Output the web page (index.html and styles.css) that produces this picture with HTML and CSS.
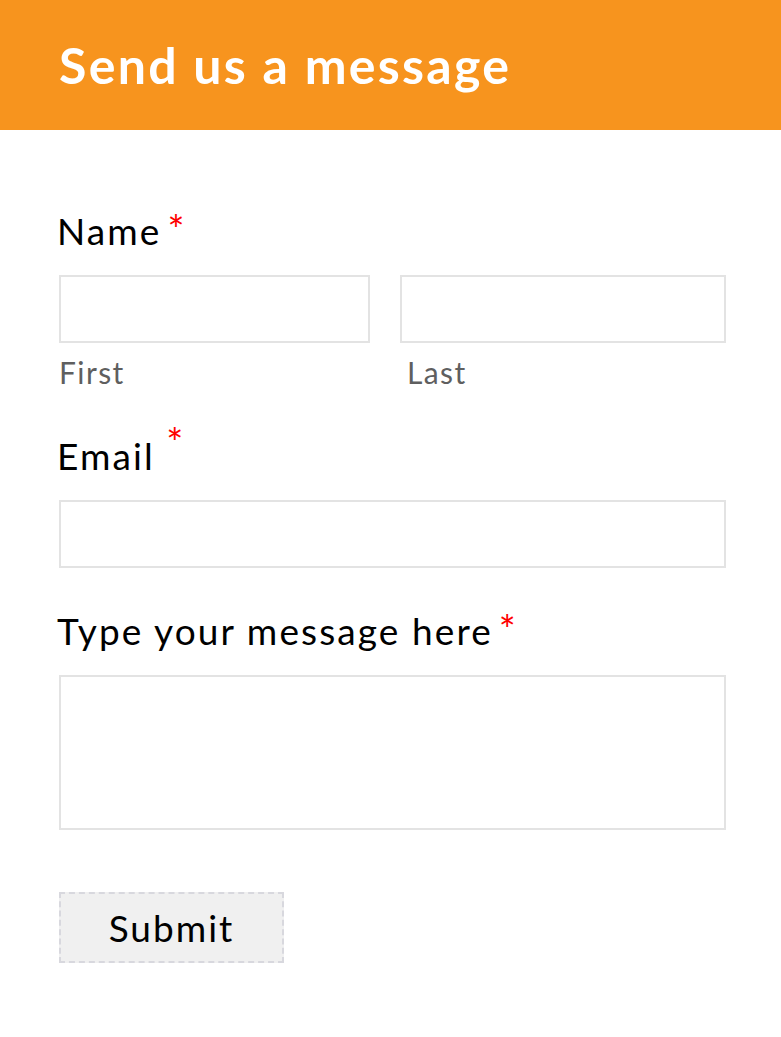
FILE: index.html
```html
<!DOCTYPE html>
<html lang="en">

<head>
    <meta charset="UTF-8">
    <meta name="viewport" content="width=device-width, initial-scale=1.0">
    <title>Send us a message</title>
    <link rel="stylesheet" href="styles.css">
</head>

<body>
    <header class="banner">
        <h1>Send us a message</h1>
    </header>
    <form class="contact">
        <div class="field">
            <label class="field-label">Name<span class="req">*</span></label>
            <div class="name-row">
                <div class="name-col first">
                    <input type="text" class="box">
                    <span class="sub">First</span>
                </div>
                <div class="name-col last">
                    <input type="text" class="box">
                    <span class="sub">Last</span>
                </div>
            </div>
        </div>
        <div class="field email">
            <label class="field-label">Email <span class="req up">*</span></label>
            <input type="email" class="box">
        </div>
        <div class="field msg">
            <label class="field-label">Type your message here<span class="req">*</span></label>
            <textarea class="box area"></textarea>
        </div>
        <button type="submit" class="submit">Submit</button>
    </form>
</body>

</html>
```

FILE: styles.css
```css
body {
    margin: 0;
    background-color: #fff;
    font-family: Lato, "Open Sans", sans-serif;
    color: #000;
}

.banner {
    background-color: #f7941e;
    height: 130px;
    padding-left: 59px;
    display: flex;
    align-items: center;
}

.banner h1 {
    margin: 0;
    color: #fff;
    font-size: 50px;
    font-weight: 700;
    line-height: 60px;
    letter-spacing: 2.3px;
}

.contact {
    padding: 79px 55px 0 59px;
}

.field {
    margin-bottom: 44px;
}

.field.email {
    margin-bottom: 41px;
}

.field.msg {
    margin-bottom: 62px;
}

.field-label {
    display: block;
    margin-left: -2px;
    margin-bottom: 22px;
    font-size: 37px;
    line-height: 44px;
    letter-spacing: 2.1px;
}

.req {
    color: #ff0000;
    margin-left: 6px;
    font-size: 40px;
    line-height: 0;
}

.req.up {
    margin-left: 0;
    position: relative;
    top: -12px;
}

.name-row {
    display: flex;
    gap: 30px;
}

.name-col {
    display: flex;
    flex-direction: column;
}

.name-col.first {
    width: 311px;
}

.name-col.last {
    width: 326px;
}

.box {
    display: block;
    box-sizing: border-box;
    width: 100%;
    height: 68px;
    margin: 0;
    border: 2px solid #e3e3e3;
    background: #fff;
    font-family: inherit;
    font-size: 30px;
}

.area {
    height: 155px;
    resize: none;
}

.sub {
    margin-top: 11px;
    font-size: 30px;
    line-height: 36px;
    color: #5f5f5f;
    letter-spacing: 1.4px;
}

.last .sub {
    margin-left: 7px;
}

.submit {
    width: 225px;
    height: 71px;
    border: 2px dashed #d8d8de;
    background-color: #f0f0f0;
    font-family: inherit;
    font-size: 37px;
    letter-spacing: 2px;
    color: #000;
    cursor: pointer;
}
```
